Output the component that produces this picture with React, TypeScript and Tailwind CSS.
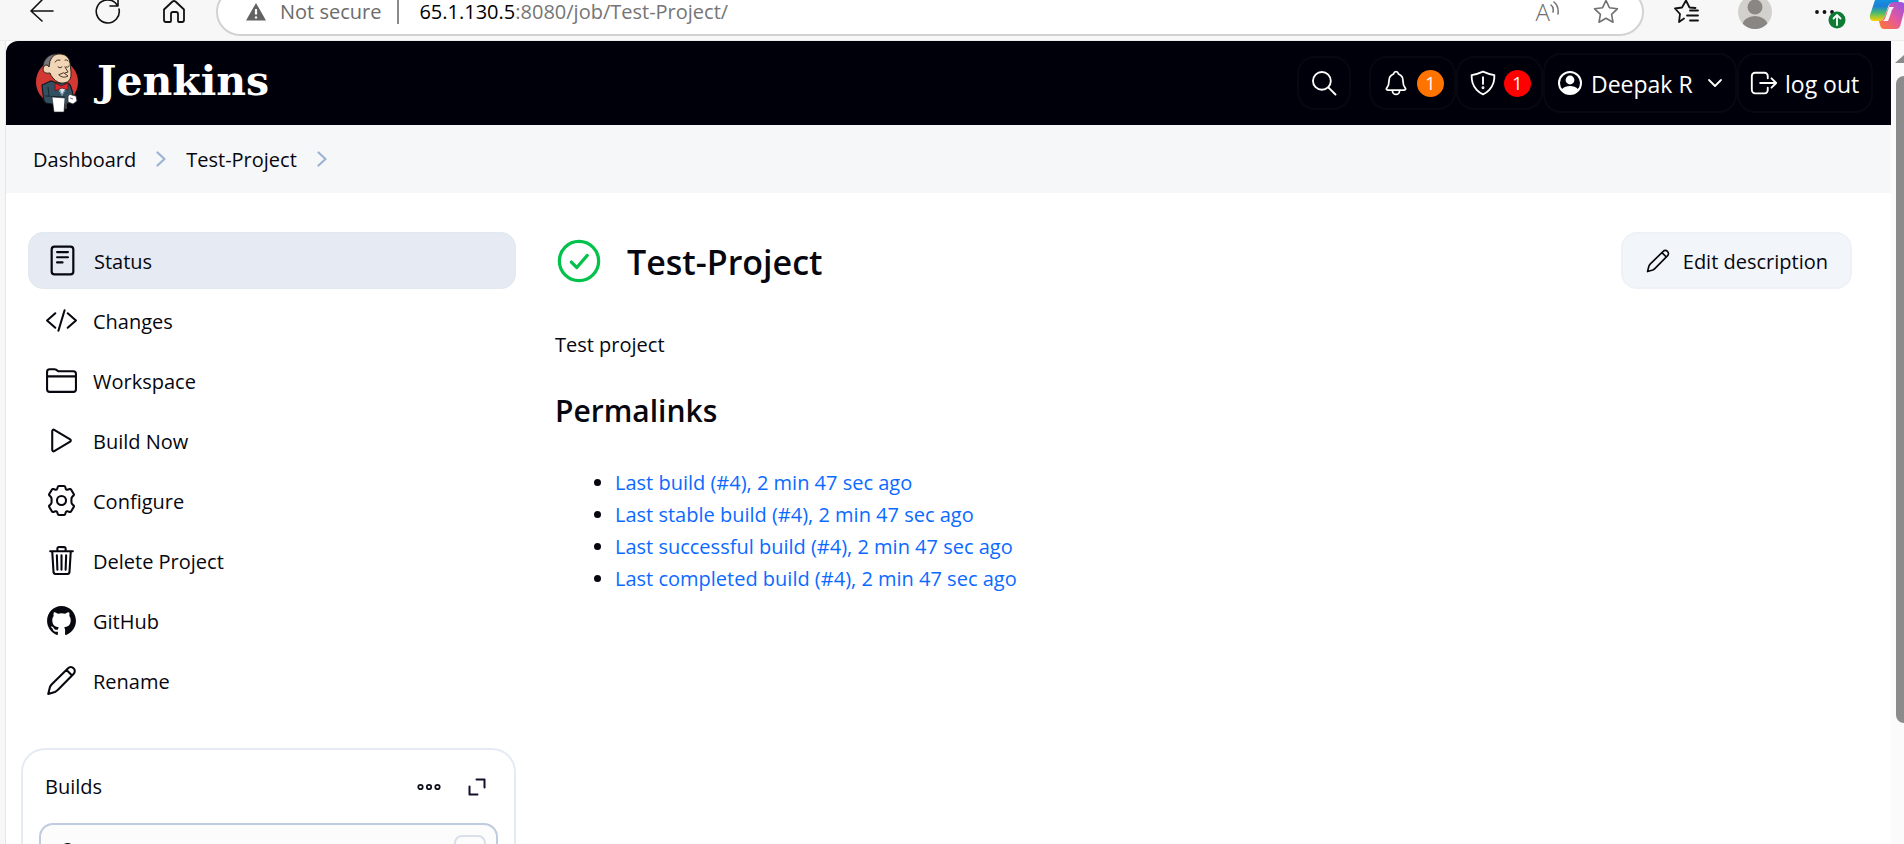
import type { ReactNode } from "react";

type IconProps = { className?: string };

function Glyph({ className = "size-[33px]", width = 32, children }: { className?: string; width?: number; children: ReactNode }) {
  return (
    <svg
      viewBox="0 0 512 512"
      className={`shrink-0 ${className}`}
      fill="none"
      stroke="currentColor"
      strokeWidth={width}
      strokeLinecap="round"
      strokeLinejoin="round"
      aria-hidden="true"
    >
      {children}
    </svg>
  );
}

const StatusIcon = () => (
  <Glyph width={34}>
    <rect x="88" y="40" width="336" height="432" rx="44" />
    <path d="M172 126h168M172 206h168M172 286h84" />
  </Glyph>
);

const CodeIcon = () => (
  <Glyph>
    <path d="M160 368L32 256l128-112M352 368l128-112-128-112M304 96l-96 320" />
  </Glyph>
);

const FolderIcon = () => (
  <Glyph>
    <path d="M440 432H72a40 40 0 01-40-40V120a40 40 0 0140-40h75.89a40 40 0 0122.19 6.72l27.84 18.56a40 40 0 0022.19 6.72H440a40 40 0 0140 40v240a40 40 0 01-40 40zM32 192h448" />
  </Glyph>
);

const PlayIcon = () => (
  <Glyph>
    <path d="M112 111v290c0 17.44 17 28.52 31 20.16l247.9-148.37c12.12-7.25 12.12-26.33 0-33.58L143 90.84c-14-8.36-31 2.72-31 20.16z" />
  </Glyph>
);

const GearIcon = () => (
  <Glyph>
    <circle cx="256" cy="256" r="70" />
    <path d="M216 32h80q14 0 18 14l8 28q6 20 26 14l34-10q16-4 24 10l40 68q8 14-4 24l-18 18q-14 14-14 36v44q0 22 14 36l18 18q12 10 4 24l-40 68q-8 14-24 10l-34-10q-20-6-26 14l-8 28q-4 14-18 14h-80q-14 0-18-14l-8-28q-6-20-26-14l-34 10q-16 4-24-10l-40-68q-8-14 4-24l18-18q14-14 14-36v-44q0-22-14-36l-18-18q-12-10-4-24l40-68q8-14 24-10l34 10q20 6 26-14l8-28q4-14 18-14z" />
  </Glyph>
);

const TrashIcon = () => (
  <Glyph>
    <path d="M112 112l20 320c.95 18.49 14.4 32 32 32h184c17.67 0 30.87-13.51 32-32l20-320M80 112h352M192 112V72a23.93 23.93 0 0124-24h80a23.93 23.93 0 0124 24v40M256 176v224M184 176l8 224M328 176l-8 224" />
  </Glyph>
);

const GithubIcon = () => (
  <svg viewBox="0 0 512 512" className="size-[33px] shrink-0" fill="currentColor" aria-hidden="true">
    <path d="M256 32C132.3 32 32 134.9 32 261.7c0 101.5 64.2 187.5 153.2 217.9a17.56 17.56 0 003.8.4c8.3 0 11.5-6.1 11.5-11.4 0-5.5-.2-19.9-.3-39.1a102.4 102.4 0 01-22.6 2.7c-43.1 0-52.9-33.5-52.9-33.5-10.2-26.5-24.9-33.6-24.9-33.6-19.5-13.7-.1-14.1 1.4-14.1h.1c22.5 2 34.3 23.8 34.3 23.8 11.2 19.6 26.2 25.1 39.6 25.1a63 63 0 0025.6-6c2-14.8 7.8-24.9 14.2-30.7-49.7-5.8-102-25.5-102-113.5 0-25.1 8.7-45.6 23-61.6-2.3-5.8-10-29.2 2.2-60.8a18.64 18.64 0 015-.5c8.1 0 26.4 3.1 56.6 24.1a208.21 208.21 0 01112.2 0c30.2-21 48.5-24.1 56.6-24.1a18.64 18.64 0 015 .5c12.2 31.6 4.5 55 2.2 60.8 14.3 16.1 23 36.6 23 61.6 0 88.2-52.4 107.6-102.3 113.3 8 7.1 15.2 21.1 15.2 42.5 0 30.7-.3 55.5-.3 63 0 5.4 3.1 11.5 11.4 11.5a19.35 19.35 0 004-.4C415.9 449.2 480 363.1 480 261.7 480 134.9 379.7 32 256 32z" />
  </svg>
);

const PencilIcon = ({ className = "size-[33px]" }: IconProps) => (
  <Glyph className={className}>
    <path d="M358 66a56 56 0 0184 0 58 58 0 014 84L198 402q-18 20-44 32L50 464l26-104q10-26 30-46zM334 92l86 86" />
  </Glyph>
);

const SearchIcon = ({ className = "size-[30px]" }: IconProps) => (
  <Glyph className={className}>
    <circle cx="220" cy="220" r="152" />
    <path d="M334 334l118 118" />
  </Glyph>
);

const BellIcon = () => (
  <Glyph className="size-7">
    <path d="M427.68 351.43C402 320 383.87 304 383.87 217.35 383.87 138 343.35 109.73 310 96c-4.43-1.82-8.6-6-9.95-10.55C294.2 65.54 277.8 48 256 48s-38.21 17.55-44 37.47c-1.35 4.6-5.52 8.71-9.95 10.53-33.39 13.75-73.87 41.92-73.87 121.35C128.13 304 110 320 84.32 351.43 73.68 364.45 83 384 101.61 384h308.88c18.51 0 27.77-19.61 17.19-32.57zM320 384v16a64 64 0 01-128 0v-16" />
  </Glyph>
);

const ShieldIcon = () => (
  <Glyph className="size-7" width={34}>
    <path d="M463.1 112.37C373.68 96.33 336.71 84.45 256 48c-80.71 36.45-117.68 48.33-207.1 64.37C32.7 369.13 240.58 457.79 256 464c15.42-6.21 223.3-94.87 207.1-351.63zM256 150v122" />
    <circle cx="256" cy="344" r="10" fill="currentColor" />
  </Glyph>
);

const PersonIcon = () => (
  <svg viewBox="0 0 26 26" className="size-[26px] shrink-0" aria-hidden="true">
    <circle cx="13" cy="13" r="11" fill="none" stroke="currentColor" strokeWidth="2" />
    <circle cx="13" cy="10" r="4.4" fill="currentColor" />
    <path d="M4.6 19.5C7 16.8 10 16 13 16s6 .8 8.400 3.500C19.500 22.500 16.500 24 13 24s-6.500-1.500-8.400-4.500z" fill="currentColor" />
  </svg>
);

const LogoutIcon = () => (
  <Glyph className="size-[30px]">
    <path d="M320 176v-40a56 56 0 00-56-56H104a56 56 0 00-56 56v240a56 56 0 0056 56h164a54 54 0 0052-56v-40M384 176l80 80-80 80M191 256h273" />
  </Glyph>
);

const Chevron = () => (
  <svg viewBox="0 0 10 16" className="h-4 w-[10px] shrink-0 text-[#9db3d3]" fill="none" stroke="currentColor" strokeWidth="2.200" strokeLinecap="round" strokeLinejoin="round" aria-hidden="true">
    <path d="M1.500 1.500L8.500 8l-7 6.500" />
  </svg>
);

function ButlerLogo() {
  return (
    <svg viewBox="0 0 44 62" className="h-[62px] w-11 shrink-0" aria-hidden="true">
      <ellipse cx="22" cy="30" rx="21" ry="22" fill="#d33833" />
      <path d="M9 49Q8 43 7 33l9-4 6 2h11q4 3 5 13l-4 7-10 2-13-2z" fill="#335061" stroke="#111820" strokeWidth="1.200" />
      <path d="M13 20Q6 18 9 10q3-7 11-8h5l-8 6-2 6z" fill="#77757a" stroke="#222" strokeWidth=".8" />
      <path d="M15 9Q18 1 26 2q8 1 9 9l1 9q1 10-7 11-6 1-11-5-2-2-3-5-6 1-7-3 0-5 4-5 1 0 2 2z" fill="#f0d6b7" stroke="#33241b" strokeWidth="1" />
      <path d="M20 10q2-3 5-2M30 8q2-1 3 1M23 15q2 2 4 0M31 15q1.500 1 3-1M30 15l3 5-3 1M24 23q4 4 9 1l-4-3z" fill="none" stroke="#4a3428" strokeWidth="1" strokeLinecap="round" />
      <path d="M22 35l5 9 5-9z" fill="#d8e3e8" />
      <path d="M24 37l3 6 3-5" fill="none" stroke="#5f8aa0" strokeWidth="1" />
      <path d="M20 31l6 3 7-3v7l-6-2-7 3z" fill="#d9262f" stroke="#65110f" strokeWidth=".8" />
      <path d="M13 35l1 9M10 44l20 1" stroke="#172833" strokeWidth="1" fill="none" />
      <path d="M17 45l13 1-1 14H19z" fill="#fff" stroke="#222" strokeWidth=".6" />
      <path d="M33 44q2-3 4-1l4 1 1 5-4 3-5-2z" fill="#fff" stroke="#333" strokeWidth=".8" />
      <path d="M35 46l3 1M31 51v6" stroke="#777" strokeWidth="1" />
    </svg>
  );
}

function BrowserBar() {
  return (
    <div className="h-[41px] shrink-0 overflow-hidden border-b border-[#ececec] bg-[#f7f7f7]">
      <div className="-mt-4 flex h-[56px] items-center">
        <div className="flex w-[216px] shrink-0 items-center gap-[38px] pl-7">
          <button aria-label="Back">
            <svg viewBox="0 0 28 28" className="size-7" fill="none" stroke="#111" strokeWidth="1.600" strokeLinecap="round" strokeLinejoin="round">
              <path d="M25 13H3M14 2L3 13l11 10" />
            </svg>
          </button>
          <button aria-label="Refresh">
            <svg viewBox="0 0 28 28" className="size-7" fill="none" stroke="#111" strokeWidth="1.600" strokeLinecap="round" strokeLinejoin="round">
              <path d="M25 11A11.500 11.500 0 1 1 21 4.500L24 8M24 1v7h-8" />
            </svg>
          </button>
          <button aria-label="Home">
            <svg viewBox="0 0 28 28" className="size-7" fill="none" stroke="#111" strokeWidth="1.800" strokeLinejoin="round">
              <path d="M4 11.500L12.500 3.500q1.500-1 3 0L24 11.500V22q0 2-2 2h-3q-1 0-1-1v-7q0-2-2-2h-3q-2 0-2 2v7q0 1-1 1H6q-2 0-2-2z" />
            </svg>
          </button>
        </div>
        <div className="flex h-12 min-w-0 flex-1 items-center rounded-full border-2 border-[#d2d2d2] bg-white pr-[22px] pl-7 text-xl leading-5 whitespace-nowrap">
          <svg viewBox="0 0 20 18" className="h-[18px] w-5 shrink-0" aria-hidden="true">
            <path d="M10 0l10 17.500H0z" fill="#626262" />
            <path d="M10 6v5.500M10 13.500v2" stroke="#fff" strokeWidth="2.200" />
          </svg>
          <span className="ml-[14px] text-[#6b6b6b]">Not secure</span>
          <span className="ml-4 h-6 w-0.5 bg-[#8a8a8a]" />
          <span className="ml-5 text-black">
            65.1.130.5<span className="text-[#757575]">:8080/job/Test-Project/</span>
          </span>
          <button aria-label="Read aloud" className="ml-auto flex items-start text-[#707070]">
            <span className="text-2xl leading-6 font-light">A</span>
            <svg viewBox="0 0 10 16" className="h-4 w-[10px]" fill="none" stroke="currentColor" strokeWidth="1.500" strokeLinecap="round">
              <path d="M1 5q3 2 2 7M4 2q5 4 4 12" />
            </svg>
          </button>
          <button aria-label="Add to favorites" className="ml-8">
            <svg viewBox="0 0 28 28" className="size-7" fill="none" stroke="#707070" strokeWidth="1.600" strokeLinejoin="round">
              <path d="M14 2.500l3.400 7.200 8 1.100-5.800 5.500 1.400 7.900-7-3.900-7 3.900 1.400-7.900L2.600 10.800l8-1.100z" />
            </svg>
          </button>
        </div>
        <div className="flex w-[260px] shrink-0 items-center overflow-hidden pl-[29px]">
          <button aria-label="Favorites" className="shrink-0">
            <svg viewBox="0 0 28 28" className="size-7" fill="none" stroke="#111" strokeWidth="1.800" strokeLinecap="round" strokeLinejoin="round">
              <path d="M11 20.500L6 24l1-8-5-5.500 7-1L13 2.500l3.500 7 6 .5M17 12.500h8M14 17.500h11M17 22.500h8" />
            </svg>
          </button>
          <svg viewBox="0 0 34 34" className="ml-[37px] size-[34px] shrink-0" role="img" aria-label="Profile">
            <clipPath id="avatar-clip">
              <circle cx="17" cy="17" r="17" />
            </clipPath>
            <circle cx="17" cy="17" r="17" fill="#d3d1ce" />
            <g clipPath="url(#avatar-clip)" fill="#8a8683">
              <circle cx="17" cy="12" r="7.500" />
              <ellipse cx="17" cy="30" rx="12.500" ry="9" />
            </g>
          </svg>
          <svg viewBox="0 0 34 34" className="ml-[41px] size-[34px] shrink-0" role="img" aria-label="Settings, update available">
            <g fill="#111">
              <circle cx="4" cy="17" r="1.900" />
              <circle cx="11.500" cy="17" r="1.900" />
              <circle cx="19" cy="17" r="1.900" />
            </g>
            <circle cx="24" cy="25" r="8.500" fill="#0f7b34" />
            <path d="M24 30v-9.500M20.500 23.500L24 20l3.500 3.500" fill="none" stroke="#fff" strokeWidth="1.800" strokeLinecap="round" />
          </svg>
          <svg viewBox="0 0 40 40" className="ml-[22px] size-10 shrink-0" role="img" aria-label="Copilot">
            <defs>
              <linearGradient id="co-a" x1="0" y1="0" x2="0" y2="1">
                <stop offset="0" stopColor="#0ba5e8" />
                <stop offset=".45" stopColor="#1a7fd8" />
                <stop offset=".7" stopColor="#4bbb6b" />
                <stop offset="1" stopColor="#ffd000" />
              </linearGradient>
              <linearGradient id="co-b" x1="1" y1="0" x2="0" y2="1">
                <stop offset="0" stopColor="#8a55ee" />
                <stop offset=".5" stopColor="#e4589c" />
                <stop offset="1" stopColor="#ff7a2b" />
              </linearGradient>
            </defs>
            <path d="M11 2h14q3 0 4 4l1 5h-6q-4 0-5 4l-3 9q-2 5-6 5H5q-5 0-4-6L6 8q1-6 5-6z" fill="url(#co-a)" />
            <path d="M27 37H15q-3 0-4-4l-1-4q4 0 6-5l4-10q1-4 5-4h6q6 0 5 6l-4 15q-1 6-5 6z" fill="url(#co-b)" />
            <path d="M20 15h5q-2 2-3 6l-3 8h-5q2-1 3-5z" fill="#f7f7f7" />
          </svg>
        </div>
      </div>
    </div>
  );
}

function Count({ tone, children }: { tone: string; children: ReactNode }) {
  return <span className={`flex size-[27px] items-center justify-center rounded-full text-lg leading-none ${tone}`}>{children}</span>;
}

function Header() {
  const box = "flex items-center rounded-[18px] border-2 border-[#07070f]";
  return (
    <header className="flex h-[84px] shrink-0 items-center rounded-tl-xl bg-[#00000a] pr-[18px] pl-[29px] text-white">
      <a href="#home" className="flex items-center gap-[18px]">
        <ButlerLogo />
        <span className="pb-1 font-['DejaVu_Serif',serif] text-[41px] leading-none font-bold">Jenkins</span>
      </a>
      <div className="ml-auto flex items-center text-[23px] whitespace-nowrap">
        <button aria-label="Search" className={`${box} mr-[18px] h-[54px] w-[54px] justify-center`}>
          <SearchIcon />
        </button>
        <button aria-label="Notifications" className={`${box} h-[54px] w-[87px] gap-[7px] pl-[11px]`}>
          <BellIcon />
          <Count tone="bg-[#ff7300]">1</Count>
        </button>
        <button aria-label="Security warnings" className={`${box} h-[54px] w-[87px] gap-[7px] pl-[11px]`}>
          <ShieldIcon />
          <Count tone="bg-[#ff0000]">1</Count>
        </button>
        <a href="#user" className={`${box} h-[60px] w-[194px] gap-2 pl-3`}>
          <PersonIcon />
          <span className="pt-0.5">Deepak R</span>
          <svg viewBox="0 0 16 10" className="ml-[6px] h-[10px] w-4" fill="none" stroke="currentColor" strokeWidth="1.800" strokeLinecap="round" strokeLinejoin="round" aria-hidden="true">
            <path d="M2 2l6 6 6-6" />
          </svg>
        </a>
        <a href="#logout" className={`${box} h-[60px] w-[136px] gap-[6px] pl-[10px]`}>
          <LogoutIcon />
          <span className="pt-0.5">log out</span>
        </a>
      </div>
    </header>
  );
}

const tasks: { label: string; icon: ReactNode; active?: boolean }[] = [
  { label: "Status", icon: <StatusIcon />, active: true },
  { label: "Changes", icon: <CodeIcon /> },
  { label: "Workspace", icon: <FolderIcon /> },
  { label: "Build Now", icon: <PlayIcon /> },
  { label: "Configure", icon: <GearIcon /> },
  { label: "Delete Project", icon: <TrashIcon /> },
  { label: "GitHub", icon: <GithubIcon /> },
  { label: "Rename", icon: <PencilIcon /> },
];

const permalinks = [
  "Last build (#4), 2 min 47 sec ago",
  "Last stable build (#4), 2 min 47 sec ago",
  "Last successful build (#4), 2 min 47 sec ago",
  "Last completed build (#4), 2 min 47 sec ago",
];

function Sidebar() {
  return (
    <aside className="w-[495px] shrink-0">
      <nav className="flex flex-col gap-[3px] pl-[7px]">
        {tasks.map((task) => (
          <a
            key={task.label}
            href={`#${task.label}`}
            className={`flex h-[57px] items-center gap-[15px] rounded-[15px] pl-[17px] ${task.active ? "border border-[#e1e8f0] bg-[#e6eaf3] pl-4" : ""}`}
          >
            {task.icon}
            <span className="pt-0.5">{task.label}</span>
          </a>
        ))}
      </nav>
      <section className="mt-[39px] rounded-t-3xl border-2 border-b-0 border-[#e6ebf3] px-4 pt-[15px]">
        <div className="flex h-[43px] items-center pl-[6px]">
          <h2>Builds</h2>
          <button aria-label="More actions" className="ml-auto">
            <svg viewBox="0 0 24 8" className="h-2 w-6" fill="none" stroke="#11111d" strokeWidth="1.800">
              <circle cx="3.500" cy="4" r="2.200" />
              <circle cx="12" cy="4" r="2.200" />
              <circle cx="20.500" cy="4" r="2.200" />
            </svg>
          </button>
          <button aria-label="Expand builds" className="mr-3 ml-[27px]">
            <svg viewBox="0 0 18 18" className="size-[18px]" fill="none" stroke="#11112b" strokeWidth="2" strokeLinecap="round" strokeLinejoin="round">
              <path d="M8.500 1.500h8v8M1.500 8.500v8h8" />
            </svg>
          </button>
        </div>
        <label className="mt-[15px] flex h-14 items-center rounded-[14px] border-2 border-[#bfcbdf] bg-[#fcfcfd] pr-[10px] pl-[18px]">
          <SearchIcon className="size-5" />
          <input type="search" aria-label="Filter builds" className="h-full min-w-0 flex-1 bg-transparent px-3 outline-none" />
          <kbd className="flex size-8 items-center justify-center rounded-lg border-2 border-[#d9e0ec] font-sans text-base text-[#555570]">/</kbd>
        </label>
      </section>
    </aside>
  );
}

export default function App() {
  return (
    <div className="flex h-screen flex-col overflow-hidden bg-[#f7f7f7] font-['Open_Sans','Noto_Sans',sans-serif] text-xl text-[#07070f]">
      <BrowserBar />
      <div className="flex min-h-0 flex-1">
        <div className="w-[6px] shrink-0 border-r border-[#e6e6e6]" />
        <div className="flex min-w-0 flex-1 flex-col overflow-hidden bg-white">
          <Header />
          <nav aria-label="Breadcrumb" className="flex h-[68px] shrink-0 items-center gap-5 bg-[#f6f7f9] pl-[27px]">
            <a href="#dashboard" className="pt-0.5">Dashboard</a>
            <Chevron />
            <a href="#project" className="pt-0.5">Test-Project</a>
            <Chevron />
          </nav>
          <div className="flex gap-[39px] pt-[39px] pr-[39px] pl-[15px]">
            <Sidebar />
            <main className="min-w-0 flex-1">
              <div className="flex h-[57px] items-center">
                <svg viewBox="0 0 44 44" className="size-12 shrink-0" fill="none" stroke="#02c24b" strokeWidth="3" strokeLinecap="round" strokeLinejoin="round" role="img" aria-label="Success">
                  <circle cx="22" cy="22" r="18" />
                  <path d="M15 23l5 5 9.500-11" />
                </svg>
                <h1 className="ml-6 pt-0.5 text-[34px] leading-none font-semibold">Test-Project</h1>
                <button className="ml-auto flex h-[57px] items-center gap-3 rounded-2xl border-2 border-[#eef2f7] bg-[#f2f5f9] pr-[22px] pl-[22px]">
                  <PencilIcon className="size-[26px]" />
                  <span className="pt-0.5">Edit description</span>
                </button>
              </div>
              <p className="mt-[42px] leading-7">Test project</p>
              <h2 className="mt-8 text-[30px] leading-10 font-semibold">Permalinks</h2>
              <ul className="mt-9 list-disc pl-[60px] leading-8">
                {permalinks.map((text) => (
                  <li key={text}>
                    <a href="#build" className="text-[#0b6aff]">{text}</a>
                  </li>
                ))}
              </ul>
            </main>
          </div>
        </div>
        <div aria-hidden="true" className="flex w-[13px] shrink-0 flex-col items-end overflow-hidden bg-[#fbfbfb] pt-[14px]">
          <svg viewBox="0 0 9 8" className="h-2 w-[9px] shrink-0" fill="#8b8b8b">
            <path d="M0 8L9 0v8z" />
          </svg>
          <div className="mt-[13px] h-[82%] w-2 rounded-l-lg bg-[#8b8b8b]" />
        </div>
      </div>
    </div>
  );
}
